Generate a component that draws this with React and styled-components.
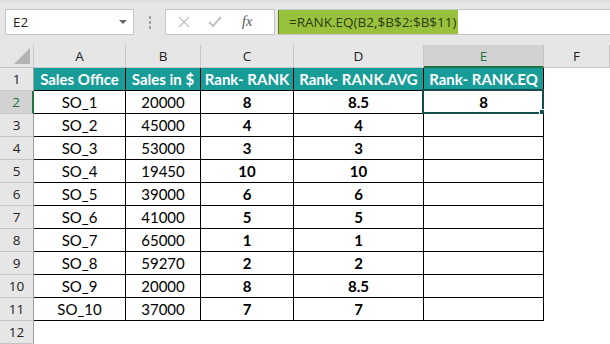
import React from "react";
import styled, { createGlobalStyle } from "styled-components";

const GlobalStyle = createGlobalStyle`
  html, body {
    margin: 0;
    padding: 0;
    background: #ffffff;
    overflow: hidden;
  }
`;

const COLS = ["A", "B", "C", "D", "E", "F"];
const WIDTHS = "34px 92px 75px 93px 130px 120px 66px";

const HEADERS = ["Sales Office", "Sales in $", "Rank- RANK", "Rank- RANK.AVG", "Rank- RANK.EQ"];

const rows = [
  ["SO_1", "20000", "8", "8.5", "8"],
  ["SO_2", "45000", "4", "4", ""],
  ["SO_3", "53000", "3", "3", ""],
  ["SO_4", "19450", "10", "10", ""],
  ["SO_5", "39000", "6", "6", ""],
  ["SO_6", "41000", "5", "5", ""],
  ["SO_7", "65000", "1", "1", ""],
  ["SO_8", "59270", "2", "2", ""],
  ["SO_9", "20000", "8", "8.5", ""],
  ["SO_10", "37000", "7", "7", ""],
];

const Page = styled.div`
  width: 610px;
  height: 344px;
  background: #ffffff;
  display: flex;
  flex-direction: column;
`;

const FormulaBar = styled.div`
  height: 45px;
  box-sizing: border-box;
  background: linear-gradient(#dcdcdc 0px, #e6e6e6 4px);
  display: flex;
  align-items: flex-start;
  padding: 9px 0 0 5px;
`;

const NameBox = styled.div`
  width: 129px;
  height: 26px;
  box-sizing: border-box;
  background: #fff;
  border: 1px solid #c6c6c6;
  display: flex;
  align-items: center;
  justify-content: space-between;
  padding: 0 6px 0 7px;
  font-family: "Open Sans", sans-serif;
  font-size: 13.5px;
  color: #222;
`;

const Caret = styled.span`
  width: 0;
  height: 0;
  border-left: 4px solid transparent;
  border-right: 4px solid transparent;
  border-top: 4px solid #666;
`;

const Dots = styled.div`
  width: 31px;
  height: 26px;
  display: flex;
  flex-direction: column;
  align-items: center;
  justify-content: center;
  gap: 2px;
  span {
    width: 2px;
    height: 3px;
    background: #a0a0a0;
  }
`;

const FxBox = styled.div`
  width: 110px;
  height: 26px;
  box-sizing: border-box;
  background: #fff;
  border: 1px solid #c6c6c6;
  display: flex;
  align-items: center;
  padding: 0 0 0 12px;
  gap: 18px;
`;

const Fx = styled.span`
  font-family: "Liberation Serif", serif;
  font-style: italic;
  font-size: 14px;
  color: #555;
  margin-left: 2px;
`;

const Input = styled.div`
  flex: 1;
  margin-left: 3px;
  height: 26px;
  box-sizing: border-box;
  background: #fff;
  border-top: 1px solid #c6c6c6;
  border-bottom: 1px solid #c6c6c6;
  display: flex;
`;

const Selected = styled.div`
  background: #99c23c;
  border-left: 1px solid #5a7d1e;
  width: 180px;
  box-sizing: border-box;
  padding-left: 10px;
  display: flex;
  align-items: center;
  font-family: "Open Sans", sans-serif;
  font-size: 13.5px;
  color: #2d3a12;
  white-space: nowrap;
`;

const Grid = styled.div`
  display: grid;
  grid-template-columns: ${WIDTHS};
  grid-template-rows: 23px;
  grid-auto-rows: 23px;
`;

const ColHead = styled.div`
  box-sizing: border-box;
  background: ${(p) => (p.$active ? "#d2d2d2" : "#e6e6e6")};
  border-right: 1px solid #c6c6c6;
  border-bottom: ${(p) => (p.$active ? "2px solid #217346" : "1px solid #c6c6c6")};
  display: flex;
  align-items: center;
  justify-content: center;
  font-family: "Open Sans", sans-serif;
  font-size: 13.5px;
  color: ${(p) => (p.$active ? "#217346" : "#222")};
`;

const Corner = styled(ColHead)`
  position: relative;
  &::after {
    content: "";
    position: absolute;
    right: 3px;
    bottom: 3px;
    border-left: 16px solid transparent;
    border-bottom: 16px solid #b4b4b4;
  }
`;

const RowHead = styled.div`
  box-sizing: border-box;
  background: ${(p) => (p.$active ? "#d2d2d2" : "#e6e6e6")};
  border-right: ${(p) => (p.$active ? "2px solid #217346" : "1px solid #9e9e9e")};
  border-bottom: 1px solid #c6c6c6;
  display: flex;
  align-items: center;
  justify-content: center;
  font-family: "Open Sans", sans-serif;
  font-size: 13.5px;
  color: ${(p) => (p.$active ? "#217346" : "#222")};
`;

const Cell = styled.div`
  position: relative;
  box-sizing: border-box;
  border-right: 1px solid ${(p) => (p.$blank ? "transparent" : "#000")};
  border-bottom: 1px solid ${(p) => (p.$blank ? "transparent" : "#000")};
  background: ${(p) => (p.$head ? "#179c97" : "#fff")};
  color: ${(p) => (p.$head ? "#fff" : "#000")};
  display: flex;
  align-items: center;
  justify-content: center;
  font-family: Lato, "Liberation Sans", sans-serif;
  font-size: 15px;
  font-weight: ${(p) => (p.$bold ? 700 : 400)};
  white-space: nowrap;
`;

const Cursor = styled.div`
  position: absolute;
  left: -2px;
  top: -2px;
  right: -1px;
  bottom: -1px;
  border: 2px solid #124f4a;
  pointer-events: none;
  &::after {
    content: "";
    position: absolute;
    right: -4px;
    bottom: -4px;
    width: 5px;
    height: 5px;
    background: #124f4a;
    border: 1px solid #fff;
  }
`;

const Close = () => (
  <svg width="12" height="12" viewBox="0 0 12 12">
    <path d="M1 1 L11 11 M11 1 L1 11" stroke="#c2c2c2" strokeWidth="1.4" fill="none" />
  </svg>
);

const Check = () => (
  <svg width="14" height="12" viewBox="0 0 14 12">
    <path d="M1 6 L5 10 L13 1" stroke="#c2c2c2" strokeWidth="2" fill="none" />
  </svg>
);

export default function App() {
  return (
    <Page>
      <GlobalStyle />
      <FormulaBar>
        <NameBox>
          E2
          <Caret />
        </NameBox>
        <Dots>
          <span />
          <span />
          <span />
        </Dots>
        <FxBox>
          <Close />
          <Check />
          <Fx>fx</Fx>
        </FxBox>
        <Input>
          <Selected>=RANK.EQ(B2,$B$2:$B$11)</Selected>
        </Input>
      </FormulaBar>
      <Grid>
        <Corner />
        {COLS.map((c) => (
          <ColHead key={c} $active={c === "E"}>
            {c}
          </ColHead>
        ))}

        <RowHead>1</RowHead>
        {HEADERS.map((h) => (
          <Cell key={h} $head $bold>
            {h}
          </Cell>
        ))}
        <Cell $blank />

        {rows.map((r, i) => (
          <React.Fragment key={i}>
            <RowHead $active={i === 0}>{i + 2}</RowHead>
            {r.map((v, j) => (
              <Cell key={j} $bold={j >= 2}>
                {v}
                {i === 0 && j === 4 && <Cursor />}
              </Cell>
            ))}
            <Cell $blank />
          </React.Fragment>
        ))}

        <RowHead>12</RowHead>
      </Grid>
    </Page>
  );
}
